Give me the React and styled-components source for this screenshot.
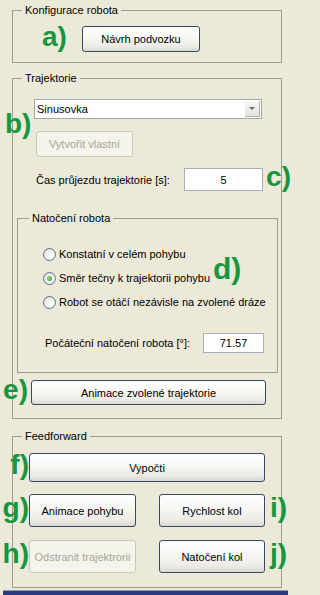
import styled, {createGlobalStyle} from "styled-components"

const GlobalStyle = createGlobalStyle`
    html, body {
        margin: 0;
        padding: 0;
        background: #ece9d8;
    }

    body {
        font-family: "Liberation Sans", Arial, sans-serif;
        font-size: 11px;
        color: #000;
    }
`

const Page = styled.div`
    box-sizing: border-box;
    width: 291px;
    height: 595px;
    padding-top: 4px;
    background: #ece9d8;
    display: flex;
    flex-direction: column;
    overflow: hidden;
`

const Group = styled.fieldset`
    position: relative;
    min-width: 0;
    margin: ${({$margin}) => $margin};
    padding: ${({$padding}) => $padding};
    border: 1px solid #9d9c90;
    display: flex;
    flex-direction: column;
`

const Legend = styled.legend`
    margin-left: ${({$indent}) => $indent}px;
    padding: 0 3px;
    font-size: 11px;
    line-height: 13px;
`

const Row = styled.div`
    display: flex;
    align-items: center;
    height: ${({$h}) => $h}px;
    margin: ${({$margin = "0"}) => $margin};
    padding-left: ${({$pad = 0}) => $pad}px;
`

const Marker = styled.span`
    flex: none;
    box-sizing: border-box;
    width: ${({$w}) => ($w ? `${$w}px` : "auto")};
    padding-right: ${({$padRight = 0}) => $padRight}px;
    text-align: ${({$align = "left"}) => $align};
    margin-bottom: 5px;
    font-family: "Liberation Sans", Arial, sans-serif;
    font-weight: bold;
    font-size: ${({$size = 28}) => $size}px;
    line-height: 16px;
    color: #15973f;
`

const FloatingMarker = styled(Marker)`
    position: absolute;
    left: ${({$left}) => $left}px;
    top: ${({$top}) => $top}px;
    margin: 0;
    line-height: ${({$size = 28}) => $size}px;
`

const Button = styled.button`
    flex: none;
    box-sizing: border-box;
    width: ${({$w}) => $w}px;
    height: ${({$h}) => $h}px;
    margin: 0 0 0 ${({$gapLeft = 0}) => $gapLeft}px;
    padding: 0;
    border: 1px solid ${({disabled}) => (disabled ? "#cac8bb" : "#34496c")};
    border-radius: 3px;
    background: ${({disabled}) => disabled
        ? "#f4f3ec"
        : "linear-gradient(#ffffff 0%, #f7f7f4 45%, #ecebe6 80%, #d9d8ce 100%)"};
    color: ${({disabled}) => (disabled ? "#a8a796" : "#000")};
    font-family: "Liberation Sans", Arial, sans-serif;
    font-size: 11px;
    font-weight: 400;
    white-space: nowrap;
    overflow: hidden;
`

const Label = styled.span`
    flex: 1;
    white-space: nowrap;
`

const Select = styled.div`
    box-sizing: border-box;
    width: 228px;
    height: 20px;
    margin-left: 21px;
    display: flex;
    border: 1px solid #a2a6aa;
    background: #fff;
`

const SelectText = styled.span`
    flex: 1;
    padding-left: 2px;
    line-height: 18px;
`

const SelectArrow = styled.span`
    box-sizing: border-box;
    width: 15px;
    margin: 1px;
    display: flex;
    align-items: center;
    justify-content: center;
    background: linear-gradient(#f6f6f3, #e4e3dc);
    border-right: 1px solid #b4b3ab;
    border-bottom: 1px solid #b4b3ab;

    &::after {
        content: "";
        border-left: 3px solid transparent;
        border-right: 3px solid transparent;
        border-top: 3px solid #6d6d6d;
    }
`

const Field = styled.input`
    flex: none;
    box-sizing: border-box;
    width: ${({$w}) => $w}px;
    height: ${({$h}) => $h}px;
    margin: 0 ${({$right = 0}) => $right}px 0 0;
    padding: 0;
    border: 1px solid #a7b0ba;
    background: #fff;
    text-align: center;
    font-family: "Liberation Sans", Arial, sans-serif;
    font-size: 11px;
    color: #000;
`

const Chooser = styled.div`
    position: relative;
    display: flex;
    flex-direction: column;
    gap: 12px;
`

const RadioList = styled.div`
    position: relative;
    display: flex;
    flex-direction: column;
    padding-left: 25px;
`

const RadioRow = styled.label`
    display: flex;
    align-items: center;
    gap: 3px;
    height: 24px;
    white-space: nowrap;
`

const RadioDot = styled.span`
    flex: none;
    box-sizing: border-box;
    width: 13px;
    height: 13px;
    border-radius: 50%;
    border: 1px solid #5b7291;
    background: radial-gradient(circle at 60% 60%, #ffffff 0%, #f1f1ec 45%, #d6d5cc 100%);
    display: flex;
    align-items: center;
    justify-content: center;

    &::after {
        content: "";
        display: ${({$on}) => ($on ? "block" : "none")};
        width: 5px;
        height: 5px;
        border-radius: 50%;
        background: radial-gradient(circle at 40% 40%, #8fdc8a, #21a121);
    }
`

const BottomBar = styled.div`
    margin: 2px 3px 0 3px;
    height: 5px;
    border-top: 1px solid #8e97bd;
    background: #2a3a82;
    box-sizing: border-box;
`

const Radio = ({checked, children}) => (
    <RadioRow>
        <RadioDot $on={checked}/>
        {children}
    </RadioRow>
)

export default function App() {
    return (
        <>
            <GlobalStyle/>
            <Page>
                <Group $margin="0 9px 0 12px" $padding="9px 0 10px">
                    <Legend $indent={9}>Konfigurace robota</Legend>
                    <Row $h={26} $pad={29}>
                        <Marker $w={40}>a)</Marker>
                        <Button $w={118} $h={26}>Návrh podvozku</Button>
                    </Row>
                </Group>

                <Group $margin="9px 9px 0 12px" $padding="14px 0 13px">
                    <Legend $indent={9}>Trajektorie</Legend>
                    <Chooser>
                        <FloatingMarker $left={-8} $top={11}>b)</FloatingMarker>
                        <Select>
                            <SelectText>Sinusovka</SelectText>
                            <SelectArrow/>
                        </Select>
                        <Row $h={26} $pad={23}>
                            <Button $w={97} $h={26} disabled>Vytvořit vlastní</Button>
                        </Row>
                    </Chooser>
                    <Row $h={23} $pad={23} $margin="11px -10px 0 0">
                        <Label>Čas průjezdu trajektorie [s]:</Label>
                        <Field $w={79} $h={23} value="5" readOnly/>
                        <Marker $w={28} $align="right">c)</Marker>
                    </Row>

                    <Group $margin="21px 3px 0 4px" $padding="17px 0 19px">
                        <Legend $indent={11}>Natočení robota</Legend>
                        <RadioList>
                            <FloatingMarker $left={195} $top={12} $size={30}>d)</FloatingMarker>
                            <Radio>Konstatní v celém pohybu</Radio>
                            <Radio checked>Směr tečny k trajektorii pohybu</Radio>
                            <Radio>Robot se otáčí nezávisle na zvolené dráze</Radio>
                        </RadioList>
                        <Row $h={20} $pad={27} $margin="19px 0 0 0">
                            <Label>Počáteční natočení robota [°]:</Label>
                            <Field $w={61} $h={20} $right={13} value="71.57" readOnly/>
                        </Row>
                    </Group>

                    <Row $h={25} $margin="7px 0 0 -13px">
                        <Marker $w={31} $align="right" $padRight={3}>e)</Marker>
                        <Button $w={235} $h={25}>Animace zvolené trajektorie</Button>
                    </Row>
                </Group>

                <Group $margin="11px 9px 0 12px" $padding="10px 0 14px">
                    <Legend $indent={9}>Feedforward</Legend>
                    <Row $h={29} $margin="0 -10px 0 -13px">
                        <Marker $w={29} $align="right">f)</Marker>
                        <Button $w={236} $h={29}>Vypočti</Button>
                    </Row>
                    <Row $h={33} $margin="12px -10px 0 -13px">
                        <Marker $w={29} $align="right">g)</Marker>
                        <Button $w={107} $h={33}>Animace pohybu</Button>
                        <Button $w={106} $h={33} $gapLeft={23}>Rychlost kol</Button>
                        <Marker $w={22} $align="right">i)</Marker>
                    </Row>
                    <Row $h={33} $margin="13px -10px 0 -13px">
                        <Marker $w={29} $align="right">h)</Marker>
                        <Button $w={107} $h={33} disabled>Odstranit trajektrorii</Button>
                        <Button $w={106} $h={33} $gapLeft={23}>Natočení kol</Button>
                        <Marker $w={22} $align="right">j)</Marker>
                    </Row>
                </Group>

                <BottomBar/>
            </Page>
        </>
    )
}
